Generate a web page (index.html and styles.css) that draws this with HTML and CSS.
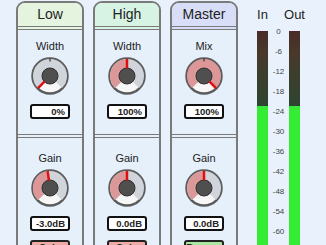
FILE: index.html
```html
<!DOCTYPE html>
<html lang="en">
<head>
    <meta charset="UTF-8">
    <meta name="viewport" content="width=device-width, initial-scale=1.0">
    <title>Mixer</title>

    <link rel="stylesheet" href="styles.css">
</head>
<body>

<div class="mixer">

    <!--Low band-->
    <div class="strip">
        <div class="strip-head head-low">Low</div>
        <div class="section section-top">
            <div class="label">Width</div>
            <svg class="knob" width="38" height="38" viewBox="0 0 38 38">
                <circle cx="19" cy="19" r="17.5" fill="#f7f7f7" stroke="#5c5c5c" stroke-width="2.5"/>
                <path d="M10.16 27.84 A12.5 12.5 0 1 1 27.84 27.84" fill="none" stroke="#cfd5db" stroke-width="9"/>
                <line x1="19" y1="1.5" x2="19" y2="4.5" stroke="#333" stroke-width="1.2"/>
                <circle cx="19" cy="19" r="8" fill="#4f4f4f" stroke="#2f2f2f" stroke-width="1"/>
                <line x1="13.7" y1="24.3" x2="6.98" y2="31.02" stroke="#e01010" stroke-width="2.5"/>
            </svg>
            <div class="value">0%</div>
        </div>
        <div class="section section-bottom">
            <div class="label">Gain</div>
            <svg class="knob" width="38" height="38" viewBox="0 0 38 38">
                <circle cx="19" cy="19" r="17.5" fill="#f7f7f7" stroke="#5c5c5c" stroke-width="2.5"/>
                <path d="M10.16 27.84 A12.5 12.5 0 1 1 27.84 27.84" fill="none" stroke="#cfd5db" stroke-width="9"/>
                <path d="M10.16 27.84 A12.5 12.5 0 0 1 17.26 6.62" fill="none" stroke="#dc9898" stroke-width="9"/>
                <circle cx="19" cy="19" r="8" fill="#4f4f4f" stroke="#2f2f2f" stroke-width="1"/>
                <line x1="17.96" y1="11.57" x2="16.63" y2="2.17" stroke="#e01010" stroke-width="2.5"/>
            </svg>
            <div class="value">-3.0dB</div>
            <button class="toggle solo">Solo</button>
        </div>
    </div>

    <!--High band-->
    <div class="strip">
        <div class="strip-head head-high">High</div>
        <div class="section section-top">
            <div class="label">Width</div>
            <svg class="knob" width="38" height="38" viewBox="0 0 38 38">
                <circle cx="19" cy="19" r="17.5" fill="#f7f7f7" stroke="#5c5c5c" stroke-width="2.5"/>
                <path d="M10.16 27.84 A12.5 12.5 0 1 1 27.84 27.84" fill="none" stroke="#cfd5db" stroke-width="9"/>
                <path d="M10.16 27.84 A12.5 12.5 0 0 1 19 6.5" fill="none" stroke="#dc9898" stroke-width="9"/>
                <circle cx="19" cy="19" r="8" fill="#4f4f4f" stroke="#2f2f2f" stroke-width="1"/>
                <line x1="19" y1="11.5" x2="19" y2="2" stroke="#e01010" stroke-width="2.5"/>
            </svg>
            <div class="value">100%</div>
        </div>
        <div class="section section-bottom">
            <div class="label">Gain</div>
            <svg class="knob" width="38" height="38" viewBox="0 0 38 38">
                <circle cx="19" cy="19" r="17.5" fill="#f7f7f7" stroke="#5c5c5c" stroke-width="2.5"/>
                <path d="M10.16 27.84 A12.5 12.5 0 1 1 27.84 27.84" fill="none" stroke="#cfd5db" stroke-width="9"/>
                <path d="M10.16 27.84 A12.5 12.5 0 0 1 19 6.5" fill="none" stroke="#dc9898" stroke-width="9"/>
                <circle cx="19" cy="19" r="8" fill="#4f4f4f" stroke="#2f2f2f" stroke-width="1"/>
                <line x1="19" y1="11.5" x2="19" y2="2" stroke="#e01010" stroke-width="2.5"/>
            </svg>
            <div class="value">0.0dB</div>
            <button class="toggle solo">Solo</button>
        </div>
    </div>

    <!--Master-->
    <div class="strip">
        <div class="strip-head head-master">Master</div>
        <div class="section section-top">
            <div class="label">Mix</div>
            <svg class="knob" width="38" height="38" viewBox="0 0 38 38">
                <circle cx="19" cy="19" r="17.5" fill="#f7f7f7" stroke="#5c5c5c" stroke-width="2.5"/>
                <path d="M10.16 27.84 A12.5 12.5 0 1 1 27.84 27.84" fill="none" stroke="#dc9898" stroke-width="9"/>
                <line x1="19" y1="1.5" x2="19" y2="4.5" stroke="#333" stroke-width="1.2"/>
                <circle cx="19" cy="19" r="8" fill="#4f4f4f" stroke="#2f2f2f" stroke-width="1"/>
                <line x1="24.3" y1="24.3" x2="31.02" y2="31.02" stroke="#e01010" stroke-width="2.5"/>
            </svg>
            <div class="value">100%</div>
        </div>
        <div class="section section-bottom">
            <div class="label">Gain</div>
            <svg class="knob" width="38" height="38" viewBox="0 0 38 38">
                <circle cx="19" cy="19" r="17.5" fill="#f7f7f7" stroke="#5c5c5c" stroke-width="2.5"/>
                <path d="M10.16 27.84 A12.5 12.5 0 1 1 27.84 27.84" fill="none" stroke="#cfd5db" stroke-width="9"/>
                <path d="M10.16 27.84 A12.5 12.5 0 0 1 19 6.5" fill="none" stroke="#dc9898" stroke-width="9"/>
                <circle cx="19" cy="19" r="8" fill="#4f4f4f" stroke="#2f2f2f" stroke-width="1"/>
                <line x1="19" y1="11.5" x2="19" y2="2" stroke="#e01010" stroke-width="2.5"/>
            </svg>
            <div class="value">0.0dB</div>
            <button class="toggle bypass">Bypass</button>
        </div>
    </div>

    <!--Level meters-->
    <div class="meters">
        <div class="meter-label">In</div>
        <div></div>
        <div class="meter-label">Out</div>

        <div class="meter"><div class="meter-off"></div></div>
        <div class="scale">
            <span>0</span>
            <span>-6</span>
            <span>-12</span>
            <span>-18</span>
            <span>-24</span>
            <span>-30</span>
            <span>-36</span>
            <span>-42</span>
            <span>-48</span>
            <span>-54</span>
            <span>-60</span>
        </div>
        <div class="meter"><div class="meter-off"></div></div>
    </div>

</div>

</body>
</html>
```

FILE: styles.css
```css
/* Page */
body {
    margin: 0;
    padding: 0;
    font-family: "Liberation Sans", Arial, sans-serif;
    background-color: #e9f2fc;
    color: #222;
    overflow: hidden;
}

.mixer {
    display: flex;
    gap: 9px;
    padding: 1px 0 0 16px;
}

/* Channel strips */
.strip {
    width: 64px;
    height: 280px;
    border: 2px solid #7a7a7a;
    border-radius: 9px 9px 0 0;
    background-color: #e6f0fb;
    display: flex;
    flex-direction: column;
    flex-shrink: 0;
}

.strip-head {
    height: 23px;
    line-height: 23px;
    text-align: center;
    font-size: 14px;
    border-radius: 7px 7px 0 0;
    border-bottom: 4px double #7a7a7a;
}

.head-low {
    background-color: #e5f4df;
}

.head-high {
    background-color: #d6f3e3;
}

.head-master {
    background-color: #d8def7;
}

.section {
    display: flex;
    flex-direction: column;
    align-items: center;
}

.section-top {
    height: 108px;
    padding-top: 10px;
    box-sizing: border-box;
    border-bottom: 4px double #7a7a7a;
}

.section-bottom {
    padding-top: 14px;
}

.label {
    font-size: 11px;
    line-height: 13px;
    color: #222;
}

.knob {
    display: block;
    margin-top: 4px;
}

/* Value readout */
.value {
    width: 40px;
    height: 15px;
    margin-top: 9px;
    box-sizing: border-box;
    border: 2px solid #111;
    border-radius: 3px;
    background-color: #fff;
    font-size: 9.5px;
    font-weight: bold;
    line-height: 11px;
    text-align: right;
    padding-right: 3px;
}

.toggle {
    width: 40px;
    height: 17px;
    margin-top: 9px;
    border: 2px solid #222;
    border-radius: 3px;
    font-family: inherit;
    font-size: 10px;
    font-weight: bold;
    padding: 0;
    color: #222;
}

.solo {
    background-color: #f0a9a9;
}

.bypass {
    background-color: #a9e6a0;
}

/* Meters */
.meters {
    display: grid;
    grid-template-columns: 11px 21px 11px;
    grid-template-rows: 30px auto;
    margin-left: 10px;
}

.meter-label {
    font-size: 13px;
    line-height: 28px;
    text-align: center;
    width: 11px;
    display: flex;
    justify-content: center;
    white-space: nowrap;
}

.meter {
    height: 230px;
    background-color: #35ec35;
}

.meter-off {
    height: 75px;
    background: linear-gradient(#4a2b29, #48392a 30%, #3b3e2c 60%, #2e4430);
}

.scale {
    display: flex;
    flex-direction: column;
    align-items: center;
    gap: 12px;
    margin-top: -3px;
    font-size: 8px;
    line-height: 8px;
    color: #444;
}
```
